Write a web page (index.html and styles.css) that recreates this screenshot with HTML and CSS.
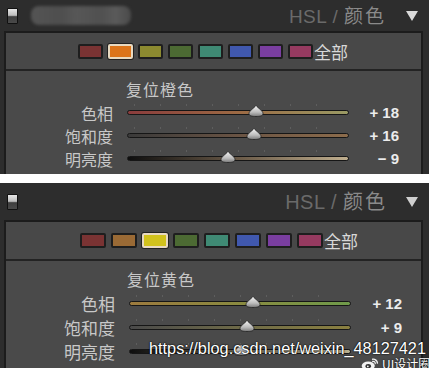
FILE: index.html
```html
<!DOCTYPE html>
<html lang="zh">
<head>
<meta charset="utf-8">
<link rel="stylesheet" href="styles.css">
</head>
<body>
<div class="page">
  <section class="panel p1">
    <header class="head">
      <span class="toggle"></span>
      <span class="blurname"></span>
      <span class="title"><span class="hsl">HSL / </span><span class="cn">颜色</span></span>
      <span class="tri"></span>
    </header>
    <div class="box">
      <div class="swatches">
        <span class="sw red"></span><span class="sw orange sel"></span><span class="sw yellow"></span><span class="sw green"></span><span class="sw aqua"></span><span class="sw blue"></span><span class="sw purple"></span><span class="sw magenta"></span><span class="all">全部</span>
      </div>
      <div class="sliders">
        <div class="reset">复位橙色</div>
        <div class="row"><span class="lab">色相</span><span class="track hue1"><i class="ticks"></i><svg class="thumb" style="left:128px" viewBox="0 0 16 12"><path d="M8 0.5 C10 3 15 6 15 8.5 C15 11 12 11.5 8 11.5 C4 11.5 1 11 1 8.5 C1 6 6 3 8 0.5Z" fill="url(#g1)" stroke="#222" stroke-width="0.8"/></svg></span><span class="val">+ 18</span></div>
        <div class="row"><span class="lab">饱和度</span><span class="track sat1"><i class="ticks"></i><svg class="thumb" style="left:126px" viewBox="0 0 16 12"><path d="M8 0.5 C10 3 15 6 15 8.5 C15 11 12 11.5 8 11.5 C4 11.5 1 11 1 8.5 C1 6 6 3 8 0.5Z" fill="url(#g1)" stroke="#222" stroke-width="0.8"/></svg></span><span class="val">+ 16</span></div>
        <div class="row"><span class="lab">明亮度</span><span class="track lum1"><i class="ticks"></i><svg class="thumb" style="left:100px" viewBox="0 0 16 12"><path d="M8 0.5 C10 3 15 6 15 8.5 C15 11 12 11.5 8 11.5 C4 11.5 1 11 1 8.5 C1 6 6 3 8 0.5Z" fill="url(#g1)" stroke="#222" stroke-width="0.8"/></svg></span><span class="val">− 9</span></div>
      </div>
    </div>
  </section>

  <section class="panel p2">
    <header class="head">
      <span class="toggle"></span>
      <span class="title"><span class="hsl">HSL / </span><span class="cn">颜色</span></span>
      <span class="tri"></span>
    </header>
    <div class="box">
      <div class="swatches">
        <span class="sw red"></span><span class="sw orange2"></span><span class="sw yellow2 sel"></span><span class="sw green"></span><span class="sw aqua"></span><span class="sw blue"></span><span class="sw purple"></span><span class="sw magenta"></span><span class="all">全部</span>
      </div>
      <div class="sliders">
        <div class="reset">复位黄色</div>
        <div class="row"><span class="lab">色相</span><span class="track hue2"><i class="ticks"></i><svg class="thumb" style="left:123px" viewBox="0 0 16 12"><path d="M8 0.5 C10 3 15 6 15 8.5 C15 11 12 11.5 8 11.5 C4 11.5 1 11 1 8.5 C1 6 6 3 8 0.5Z" fill="url(#g1)" stroke="#222" stroke-width="0.8"/></svg></span><span class="val">+ 12</span></div>
        <div class="row"><span class="lab">饱和度</span><span class="track sat2"><i class="ticks"></i><svg class="thumb" style="left:117px" viewBox="0 0 16 12"><path d="M8 0.5 C10 3 15 6 15 8.5 C15 11 12 11.5 8 11.5 C4 11.5 1 11 1 8.5 C1 6 6 3 8 0.5Z" fill="url(#g1)" stroke="#222" stroke-width="0.8"/></svg></span><span class="val">+ 9</span></div>
        <div class="row"><span class="lab">明亮度</span><span class="track lum2"><i class="ticks"></i><svg class="thumb" style="left:111px" viewBox="0 0 16 12"><path d="M8 0.5 C10 3 15 6 15 8.5 C15 11 12 11.5 8 11.5 C4 11.5 1 11 1 8.5 C1 6 6 3 8 0.5Z" fill="url(#g1)" stroke="#222" stroke-width="0.8"/></svg></span><span class="val"></span></div>
      </div>
    </div>
  </section>

  <div class="wm">https://blog.csdn.net/weixin_48127421</div>
  <div class="wm2">
    <svg class="weibo" viewBox="0 0 20 16"><ellipse cx="8" cy="10" rx="7.5" ry="5" fill="#f2f2f2"/><ellipse cx="8" cy="10.5" rx="3.2" ry="2.4" fill="#333"/><circle cx="7.5" cy="10.8" r="1" fill="#f2f2f2"/><path d="M13 2.5 A5 5 0 0 1 18.5 7" fill="none" stroke="#f2f2f2" stroke-width="1.6" stroke-linecap="round"/><path d="M13 5 A2.5 2.5 0 0 1 16 7.5" fill="none" stroke="#f2f2f2" stroke-width="1.4" stroke-linecap="round"/></svg>
    <span>UI设计圈</span>
  </div>

  <svg width="0" height="0" class="defs">
    <defs>
      <linearGradient id="g1" x1="0" y1="0" x2="0" y2="1">
        <stop offset="0" stop-color="#f4f4f4"/>
        <stop offset="0.6" stop-color="#bdbdbd"/>
        <stop offset="1" stop-color="#7a7a7a"/>
      </linearGradient>
    </defs>
  </svg>
</div>
</body>
</html>
```

FILE: styles.css
```css
html, body {
  margin: 0;
  padding: 0;
  background: #ffffff;
}
.page {
  position: relative;
  width: 429px;
  height: 368px;
  overflow: hidden;
  font-family: "Noto Sans CJK SC", "Noto Sans", sans-serif;
}
.defs { position: absolute; }

.panel {
  background: #2d2d2d;
  display: flex;
  flex-direction: column;
}
.p1 { height: 174px; }
.p2 { height: 185px; margin-top: 9px; }

.head {
  display: flex;
  align-items: center;
  padding: 0 11px 0 7px;
  gap: 0;
}
.p1 .head { height: 31px; }
.p2 .head { height: 37px; }

.toggle {
  width: 9px;
  height: 14px;
  border: 1px solid #111;
  background: linear-gradient(#e6e6e6 0, #bdbdbd 45%, #3e3e3e 55%, #4a4a4a 100%);
  border-radius: 1px;
  flex: none;
}
.blurname {
  width: 100px;
  height: 19px;
  margin-left: 13px;
  border-radius: 8px;
  background: linear-gradient(90deg, #545454 0, #4e4e4e 30%, #575757 45%, #505050 70%, #5a5a5a 85%, #4a4a4a 100%);
  filter: blur(1.5px);
}
.title {
  margin-left: auto;
  font-size: 19px;
  line-height: 1;
  letter-spacing: 0.5px;
  font-family: "Liberation Sans", "Noto Sans CJK SC", sans-serif;
}
.hsl { color: #6a6a6a; }
.cn { color: #8a8a8a; font-family: "Noto Sans CJK SC", sans-serif; letter-spacing: 2px; }
.tri {
  width: 0;
  height: 0;
  border-left: 6px solid transparent;
  border-right: 6px solid transparent;
  border-top: 10px solid #dadada;
  margin-left: 20px;
}
.p2 .tri { margin-left: 19px; border-top-color: #cfcfcf; }
.p2 .title { font-size: 20px; }

.box {
  flex: 1;
  margin: 0 6px 0 4px;
  border: 2px solid #1c1c1c;
  border-bottom: none;
  background: #4a4a4a;
  display: flex;
  flex-direction: column;
}
.swatches {
  display: flex;
  align-items: center;
  gap: 5px;
  padding-left: 72px;
  border-bottom: 2px solid #232323;
  background: #484848;
}
.p1 .swatches { height: 36px; padding-left: 72px; }
.p2 .swatches { height: 37px; padding-left: 74px; }
.sw {
  width: 21px;
  height: 11px;
  border: 2px solid #1e1e1e;
  border-radius: 2px;
  flex: none;
}
.p2 .sw { width: 22px; height: 11px; }
.sw.sel { border-color: #e8d9c0; box-shadow: 0 0 0 1px #222; }
.red { background: #7a3333; }
.orange { background: #dc741a; }
.orange2 { background: #9a6a35; }
.yellow { background: #8c8a30; }
.yellow2 { background: #d2c21c; }
.green { background: #4c6a33; }
.aqua { background: #3f8a74; }
.blue { background: #4058ae; }
.purple { background: #7a3ea0; }
.magenta { background: #963a60; }
.all {
  font-size: 17px;
  color: #d8d8d8;
  margin-left: -4px;
  line-height: 1;
}

.sliders {
  display: flex;
  flex-direction: column;
}
.reset {
  color: #c8c8c8;
  font-size: 16px;
  line-height: 1;
  padding-left: 120px;
  letter-spacing: 1px;
}
.p1 .reset { margin-top: 10px; margin-bottom: 4px; }
.p2 .reset { margin-top: 10px; margin-bottom: 4px; padding-left: 121px; }
.row {
  display: flex;
  align-items: center;
  height: 23px;
}
.p2 .row { height: 24px; }
.lab {
  width: 107px;
  text-align: right;
  color: #c8c8c8;
  font-size: 16px;
  line-height: 1;
  flex: none;
}
.p2 .lab { width: 109px; font-size: 17px; }
.track {
  position: relative;
  margin-left: 14px;
  width: 220px;
  height: 3px;
  border: 1px solid #161616;
  border-radius: 3px;
  flex: none;
}
.ticks {
  position: absolute;
  left: 6px;
  right: 6px;
  top: -7px;
  height: 2px;
  background: repeating-linear-gradient(90deg, #5e5e5e 0 1px, transparent 1px 26px);
}
.thumb {
  position: absolute;
  top: -6px;
  width: 16px;
  height: 12px;
  margin-left: -8px;
}
.hue1 { background: linear-gradient(90deg, #8a3c3c, #9c6a44 50%, #9a9a64); }
.sat1 { background: linear-gradient(90deg, #3a3a3a, #6a5444 50%, #8c6c4c); }
.lum1 { background: linear-gradient(90deg, #0e0e0e, #6a5a48 50%, #bfae8e); }
.hue2 { background: linear-gradient(90deg, #9c7a3e, #8a8a40 50%, #6f9a4a); }
.sat2 { background: linear-gradient(90deg, #4a4a4a, #6e6a48 50%, #8a8040); }
.lum2 { background: linear-gradient(90deg, #0e0e0e, #6a6450 50%, #b8b090); }
.val {
  margin-left: auto;
  width: 56px;
  text-align: right;
  padding-right: 22px;
  color: #ececec;
  font-family: "Liberation Sans", sans-serif;
  font-weight: bold;
  font-size: 15px;
  line-height: 1;
}
.p2 .val { padding-right: 19px; }

.wm {
  position: absolute;
  left: 149px;
  top: 337px;
  color: #ffffff;
  font-family: "Liberation Sans", sans-serif;
  font-size: 16.3px;
  line-height: 22px;
  text-shadow: 0 0 2px #000, 0 0 1px #000;
  white-space: nowrap;
}
.wm2 {
  position: absolute;
  left: 361px;
  top: 357px;
  display: flex;
  align-items: center;
  gap: 3px;
  color: #ffffff;
  font-size: 12px;
  line-height: 12px;
  text-shadow: 0 0 2px #000;
  white-space: nowrap;
}
.weibo { width: 18px; height: 14px; }
```
